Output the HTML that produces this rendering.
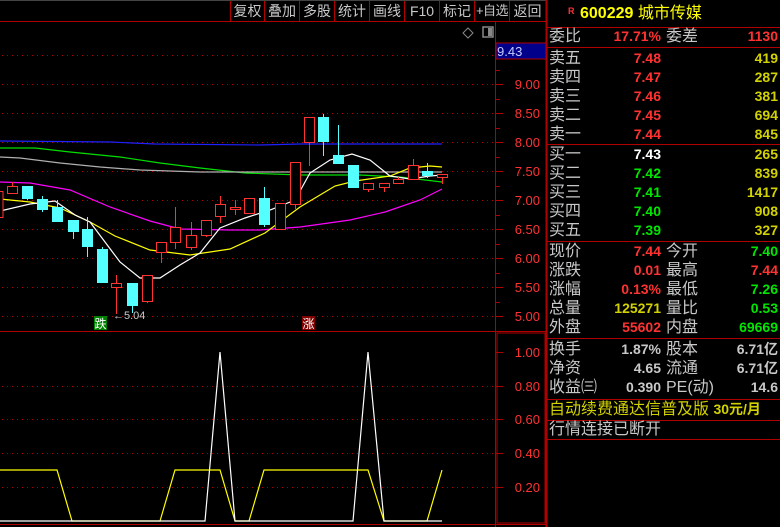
<!DOCTYPE html>
<html><head><meta charset="utf-8"><style>
body{margin:0;width:780px;height:527px;background:#000;overflow:hidden;position:relative;font-family:"Liberation Sans","Noto Sans CJK SC",sans-serif}
.t{position:absolute;white-space:nowrap;line-height:19px;height:19px}
.b{position:absolute;top:1px;height:20px;line-height:20px;color:#c8c8c8;font-size:14px;text-align:center;white-space:nowrap;overflow:hidden}
.l{left:549px;color:#c8c8c8;font-size:16px}
.l2{left:666px;color:#c8c8c8;font-size:16px}
.v1{right:119px;font-size:14px;font-weight:bold;text-align:right}
.v2{right:2px;font-size:14px;font-weight:bold;text-align:right}
.r{color:#ff3232}.g{color:#00e600}.y{color:#d2d200}.w{color:#fff}.s{color:#c8c8c8}
.hl{position:absolute;left:547px;width:233px;height:1px;background:#b00000}
</style></head><body>
<svg width="780" height="527" style="position:absolute;left:0;top:0">
<line x1="0" y1="0.5" x2="546" y2="0.5" stroke="#444"/>
<line x1="0" y1="21.5" x2="546" y2="21.5" stroke="#b00000"/>
<g stroke="#b00000">
<line x1="230.5" y1="1" x2="230.5" y2="21"/><line x1="264.5" y1="1" x2="264.5" y2="21"/><line x1="299.5" y1="1" x2="299.5" y2="21"/><line x1="334.5" y1="1" x2="334.5" y2="21"/><line x1="369.5" y1="1" x2="369.5" y2="21"/><line x1="404.5" y1="1" x2="404.5" y2="21"/><line x1="439.5" y1="1" x2="439.5" y2="21"/><line x1="474.5" y1="1" x2="474.5" y2="21"/><line x1="509.5" y1="1" x2="509.5" y2="21"/>
</g>
<line x1="495.5" y1="22" x2="495.5" y2="527" stroke="#b00000"/>
<line x1="546.5" y1="0" x2="546.5" y2="527" stroke="#b00000" stroke-width="2"/>
<line x1="0" y1="331.5" x2="546" y2="331.5" stroke="#b00000"/>
<line x1="0" y1="524.5" x2="546" y2="524.5" stroke="#b00000"/>
<rect x="496" y="43" width="50" height="16" fill="#00008b" stroke="#b00000"/>
<g stroke="#b00000" stroke-dasharray="1,4">
<line x1="2" y1="55.5" x2="495" y2="55.5"/><line x1="2" y1="84.5" x2="495" y2="84.5"/><line x1="2" y1="113.5" x2="495" y2="113.5"/><line x1="2" y1="142.5" x2="495" y2="142.5"/><line x1="2" y1="171.5" x2="495" y2="171.5"/><line x1="2" y1="200.5" x2="495" y2="200.5"/><line x1="2" y1="229.5" x2="495" y2="229.5"/><line x1="2" y1="258.5" x2="495" y2="258.5"/><line x1="2" y1="287.5" x2="495" y2="287.5"/><line x1="2" y1="316.5" x2="495" y2="316.5"/>
<line x1="2" y1="386.5" x2="495" y2="386.5"/><line x1="2" y1="419.5" x2="495" y2="419.5"/><line x1="2" y1="453.5" x2="495" y2="453.5"/><line x1="2" y1="487.5" x2="495" y2="487.5"/>
</g>
<g stroke="#b00000">
<line x1="496" y1="70.5" x2="500" y2="70.5"/><line x1="496" y1="84.5" x2="503" y2="84.5"/><line x1="496" y1="99.5" x2="500" y2="99.5"/><line x1="496" y1="113.5" x2="503" y2="113.5"/><line x1="496" y1="128.5" x2="500" y2="128.5"/><line x1="496" y1="142.5" x2="503" y2="142.5"/><line x1="496" y1="157.5" x2="500" y2="157.5"/><line x1="496" y1="171.5" x2="503" y2="171.5"/><line x1="496" y1="186.5" x2="500" y2="186.5"/><line x1="496" y1="200.5" x2="503" y2="200.5"/><line x1="496" y1="215.5" x2="500" y2="215.5"/><line x1="496" y1="229.5" x2="503" y2="229.5"/><line x1="496" y1="244.5" x2="500" y2="244.5"/><line x1="496" y1="258.5" x2="503" y2="258.5"/><line x1="496" y1="273.5" x2="500" y2="273.5"/><line x1="496" y1="287.5" x2="503" y2="287.5"/><line x1="496" y1="302.5" x2="500" y2="302.5"/><line x1="496" y1="316.5" x2="503" y2="316.5"/>
<line x1="496" y1="352.5" x2="503" y2="352.5"/><line x1="496" y1="386.5" x2="503" y2="386.5"/><line x1="496" y1="419.5" x2="503" y2="419.5"/><line x1="496" y1="453.5" x2="503" y2="453.5"/><line x1="496" y1="487.5" x2="503" y2="487.5"/>
</g>
<rect x="497" y="333" width="48" height="190" fill="none" stroke="#b00000"/>
<g font-family="Liberation Sans" font-size="13" fill="#ff3232" text-anchor="end">
<text x="540" y="89">9.00</text><text x="540" y="118">8.50</text><text x="540" y="147">8.00</text><text x="540" y="176">7.50</text><text x="540" y="205">7.00</text><text x="540" y="234">6.50</text><text x="540" y="263">6.00</text><text x="540" y="292">5.50</text><text x="540" y="321">5.00</text>
<text x="540" y="357">1.00</text><text x="540" y="391">0.80</text><text x="540" y="424">0.60</text><text x="540" y="458">0.40</text><text x="540" y="492">0.20</text>
</g>
<text x="497" y="56" font-family="Liberation Sans" font-size="13" fill="#c8c8ff">9.43</text>
<path d="M468 28 L473 33 L468 38 L463 33 Z" fill="none" stroke="#888"/>
<rect x="483" y="27" width="10" height="10" fill="none" stroke="#888" stroke-width="1.5"/><rect x="488" y="28" width="4" height="8" fill="#888"/>
<g fill="none" stroke-width="1.2">
<polyline stroke="#2020ff" points="0,141 110,142 155,144 260,145 300,144 442,144"/>
<polyline stroke="#00e000" points="0,148 35,148 70,152 120,157 160,163 200,168 245,173 300,175 360,175 400,177 442,182"/>
<polyline stroke="#b0b0b0" points="0,157 20,158 60,163 100,167 140,170 200,172 245,172 300,172 442,172"/>
<polyline stroke="#ff00ff" points="0,182 30,183 70,190 110,207 150,221 180,229 230,230 260,230 300,227 350,220 385,212 420,200 442,189"/>
<polyline stroke="#ffff00" points="0,199 30,202 60,208 90,222 115,236 150,250 190,255 230,249 265,233 300,207 335,186 355,181 390,176 410,168 430,166 442,167"/>
<polyline stroke="#ffffff" points="0,211 30,204 55,201 75,215 90,222 120,262 140,278 160,278 180,265 200,253 220,228 245,218 270,210 295,200 310,173 330,160 352,154 370,160 390,176 410,179 430,176 442,175"/>
</g>
<g stroke="#ff3232" fill="#000">
<rect x="-4" y="191.5" width="7" height="26"/>
<line x1="12.5" y1="182" x2="12.5" y2="186"/><rect x="7.5" y="186.5" width="10" height="7"/>
<line x1="116.5" y1="275" x2="116.5" y2="314"/><rect x="111.5" y="283.5" width="10" height="4"/>
<line x1="147.5" y1="301" x2="147.5" y2="303"/><rect x="142.5" y="275.5" width="10" height="26"/>
<line x1="161.5" y1="252" x2="161.5" y2="263"/><rect x="156.5" y="242.5" width="10" height="10"/>
<line x1="175.5" y1="207" x2="175.5" y2="249"/><rect x="170.5" y="227.5" width="10" height="15"/>
<line x1="191.5" y1="222" x2="191.5" y2="250"/><rect x="186.5" y="235.5" width="10" height="12"/>
<line x1="206.5" y1="235" x2="206.5" y2="237"/><rect x="201.5" y="220.5" width="10" height="15"/>
<line x1="220.5" y1="196" x2="220.5" y2="223"/><rect x="215.5" y="204.5" width="10" height="12"/>
<line x1="235.5" y1="200" x2="235.5" y2="215"/><rect x="230.5" y="207.5" width="10" height="2"/>
<rect x="244.5" y="198.5" width="10" height="15"/>
<rect x="275.5" y="203.5" width="10" height="26"/>
<line x1="295.5" y1="204" x2="295.5" y2="209"/><rect x="290.5" y="162.5" width="10" height="42"/>
<line x1="309.5" y1="142" x2="309.5" y2="166"/><rect x="304.5" y="117.5" width="10" height="25"/>
<line x1="368.5" y1="189" x2="368.5" y2="192"/><rect x="363.5" y="183.5" width="10" height="6"/>
<line x1="384.5" y1="187" x2="384.5" y2="192"/><rect x="379.5" y="183.5" width="10" height="4"/>
<line x1="398.5" y1="177" x2="398.5" y2="184"/><rect x="393.5" y="179.5" width="10" height="4"/>
<line x1="413.5" y1="159" x2="413.5" y2="165"/><rect x="408.5" y="165.5" width="10" height="14"/>
<line x1="442.5" y1="177" x2="442.5" y2="184"/><rect x="437.5" y="174.5" width="10" height="3"/>
</g>
<g stroke="#54ffff" fill="#54ffff">
<line x1="27.5" y1="186" x2="27.5" y2="200"/><rect x="22.5" y="186.5" width="10" height="12"/>
<line x1="42.5" y1="196" x2="42.5" y2="212"/><rect x="37.5" y="199.5" width="10" height="10"/>
<line x1="57.5" y1="200" x2="57.5" y2="222"/><rect x="52.5" y="207.5" width="10" height="14"/>
<line x1="73.5" y1="220" x2="73.5" y2="239"/><rect x="68.5" y="220.5" width="10" height="11"/>
<line x1="87.5" y1="217" x2="87.5" y2="257"/><rect x="82.5" y="229.5" width="10" height="17"/>
<line x1="102.5" y1="247" x2="102.5" y2="282"/><rect x="97.5" y="249.5" width="10" height="33"/>
<line x1="132.5" y1="283" x2="132.5" y2="313"/><rect x="127.5" y="283.5" width="10" height="22"/>
<line x1="264.5" y1="187" x2="264.5" y2="227"/><rect x="259.5" y="198.5" width="10" height="26"/>
<line x1="323.5" y1="114" x2="323.5" y2="156"/><rect x="318.5" y="117.5" width="10" height="24"/>
<line x1="338.5" y1="125" x2="338.5" y2="163"/><rect x="333.5" y="155.5" width="10" height="8"/>
<line x1="353.5" y1="165" x2="353.5" y2="188"/><rect x="348.5" y="165.5" width="10" height="22"/>
<line x1="427.5" y1="163" x2="427.5" y2="178"/><rect x="422.5" y="171.5" width="10" height="4"/>
</g>
<text x="113" y="319" font-family="Liberation Sans" font-size="11" fill="#c8c8c8">←5.04</text>
<rect x="94" y="316" width="13" height="14" fill="#008000"/><text x="94.5" y="328" font-size="12" fill="#fff" font-family="Noto Sans CJK SC">跌</text>
<rect x="302" y="316" width="13" height="14" fill="#800000"/><text x="302.5" y="328" font-size="12" fill="#fff" font-family="Noto Sans CJK SC">涨</text>
<polyline fill="none" stroke="#ffff00" stroke-width="1.2" points="0,470 57,470 72,521 160,521 175,470 220,470 235,521 249,521 264,470 368,470 384,521 427,521 442,470"/>
<polyline fill="none" stroke="#ffffff" stroke-width="1.2" points="0,521 205,521 220,352 235,521 353,521 368,352 384,521 442,521"/>
</svg>
<div class="b" style="left:231px;width:33px">复权</div><div class="b" style="left:265px;width:34px">叠加</div><div class="b" style="left:300px;width:34px">多股</div><div class="b" style="left:335px;width:34px">统计</div><div class="b" style="left:370px;width:34px">画线</div><div class="b" style="left:405px;width:34px">F10</div><div class="b" style="left:440px;width:34px">标记</div><div class="b" style="left:475px;width:34px;font-size:13px;letter-spacing:-0.5px">+自选</div><div class="b" style="left:510px;width:35px">返回</div>
<div class="t r" style="left:568px;top:2px;font-size:9px;font-weight:bold">R</div>
<div class="t" style="left:580px;top:4px;color:#ffff00;font-size:16px;font-weight:bold">600229 <span style="font-weight:normal">城市传媒</span></div>
<div class="hl" style="top:27px"></div>
<div class="t l" style="top:27px">委比</div><div class="t v1 r" style="top:27px">17.71%</div><div class="t l2" style="top:27px">委差</div><div class="t v2 r" style="top:27px">1130</div>
<div class="hl" style="top:47px"></div>
<div class="t l" style="top:49px">卖五</div><div class="t v1 r" style="top:49px">7.48</div><div class="t v2 y" style="top:49px">419</div>
<div class="t l" style="top:68px">卖四</div><div class="t v1 r" style="top:68px">7.47</div><div class="t v2 y" style="top:68px">287</div>
<div class="t l" style="top:87px">卖三</div><div class="t v1 r" style="top:87px">7.46</div><div class="t v2 y" style="top:87px">381</div>
<div class="t l" style="top:106px">卖二</div><div class="t v1 r" style="top:106px">7.45</div><div class="t v2 y" style="top:106px">694</div>
<div class="t l" style="top:125px">卖一</div><div class="t v1 r" style="top:125px">7.44</div><div class="t v2 y" style="top:125px">845</div>
<div class="hl" style="top:144px"></div>
<div class="t l" style="top:145px">买一</div><div class="t v1 w" style="top:145px">7.43</div><div class="t v2 y" style="top:145px">265</div>
<div class="t l" style="top:164px">买二</div><div class="t v1 g" style="top:164px">7.42</div><div class="t v2 y" style="top:164px">839</div>
<div class="t l" style="top:183px">买三</div><div class="t v1 g" style="top:183px">7.41</div><div class="t v2 y" style="top:183px">1417</div>
<div class="t l" style="top:202px">买四</div><div class="t v1 g" style="top:202px">7.40</div><div class="t v2 y" style="top:202px">908</div>
<div class="t l" style="top:221px">买五</div><div class="t v1 g" style="top:221px">7.39</div><div class="t v2 y" style="top:221px">327</div>
<div class="hl" style="top:241px"></div>
<div class="t l" style="top:242px">现价</div><div class="t v1 r" style="top:242px">7.44</div><div class="t l2" style="top:242px">今开</div><div class="t v2 g" style="top:242px">7.40</div>
<div class="t l" style="top:261px">涨跌</div><div class="t v1 r" style="top:261px">0.01</div><div class="t l2" style="top:261px">最高</div><div class="t v2 r" style="top:261px">7.44</div>
<div class="t l" style="top:280px">涨幅</div><div class="t v1 r" style="top:280px">0.13%</div><div class="t l2" style="top:280px">最低</div><div class="t v2 g" style="top:280px">7.26</div>
<div class="t l" style="top:299px">总量</div><div class="t v1 y" style="top:299px">125271</div><div class="t l2" style="top:299px">量比</div><div class="t v2 g" style="top:299px">0.53</div>
<div class="t l" style="top:318px">外盘</div><div class="t v1 r" style="top:318px">55602</div><div class="t l2" style="top:318px">内盘</div><div class="t v2 g" style="top:318px">69669</div>
<div class="hl" style="top:338px"></div>
<div class="t l" style="top:340px">换手</div><div class="t v1 s" style="top:340px">1.87%</div><div class="t l2" style="top:340px">股本</div><div class="t v2 s" style="top:340px">6.71亿</div>
<div class="t l" style="top:359px">净资</div><div class="t v1 s" style="top:359px">4.65</div><div class="t l2" style="top:359px">流通</div><div class="t v2 s" style="top:359px">6.71亿</div>
<div class="t l" style="top:378px">收益㈢</div><div class="t v1 s" style="top:378px">0.390</div><div class="t l2" style="top:378px">PE(动)</div><div class="t v2 s" style="top:378px">14.6</div>
<div class="hl" style="top:399px"></div>
<div class="t l" style="top:400px;color:#d2d200">自动续费通达信普及版 <b style="font-size:14px">30元/月</b></div>
<div class="hl" style="top:420px"></div>
<div class="t l" style="top:420px">行情连接已断开</div>
<div class="hl" style="top:439px"></div>
</body></html>
